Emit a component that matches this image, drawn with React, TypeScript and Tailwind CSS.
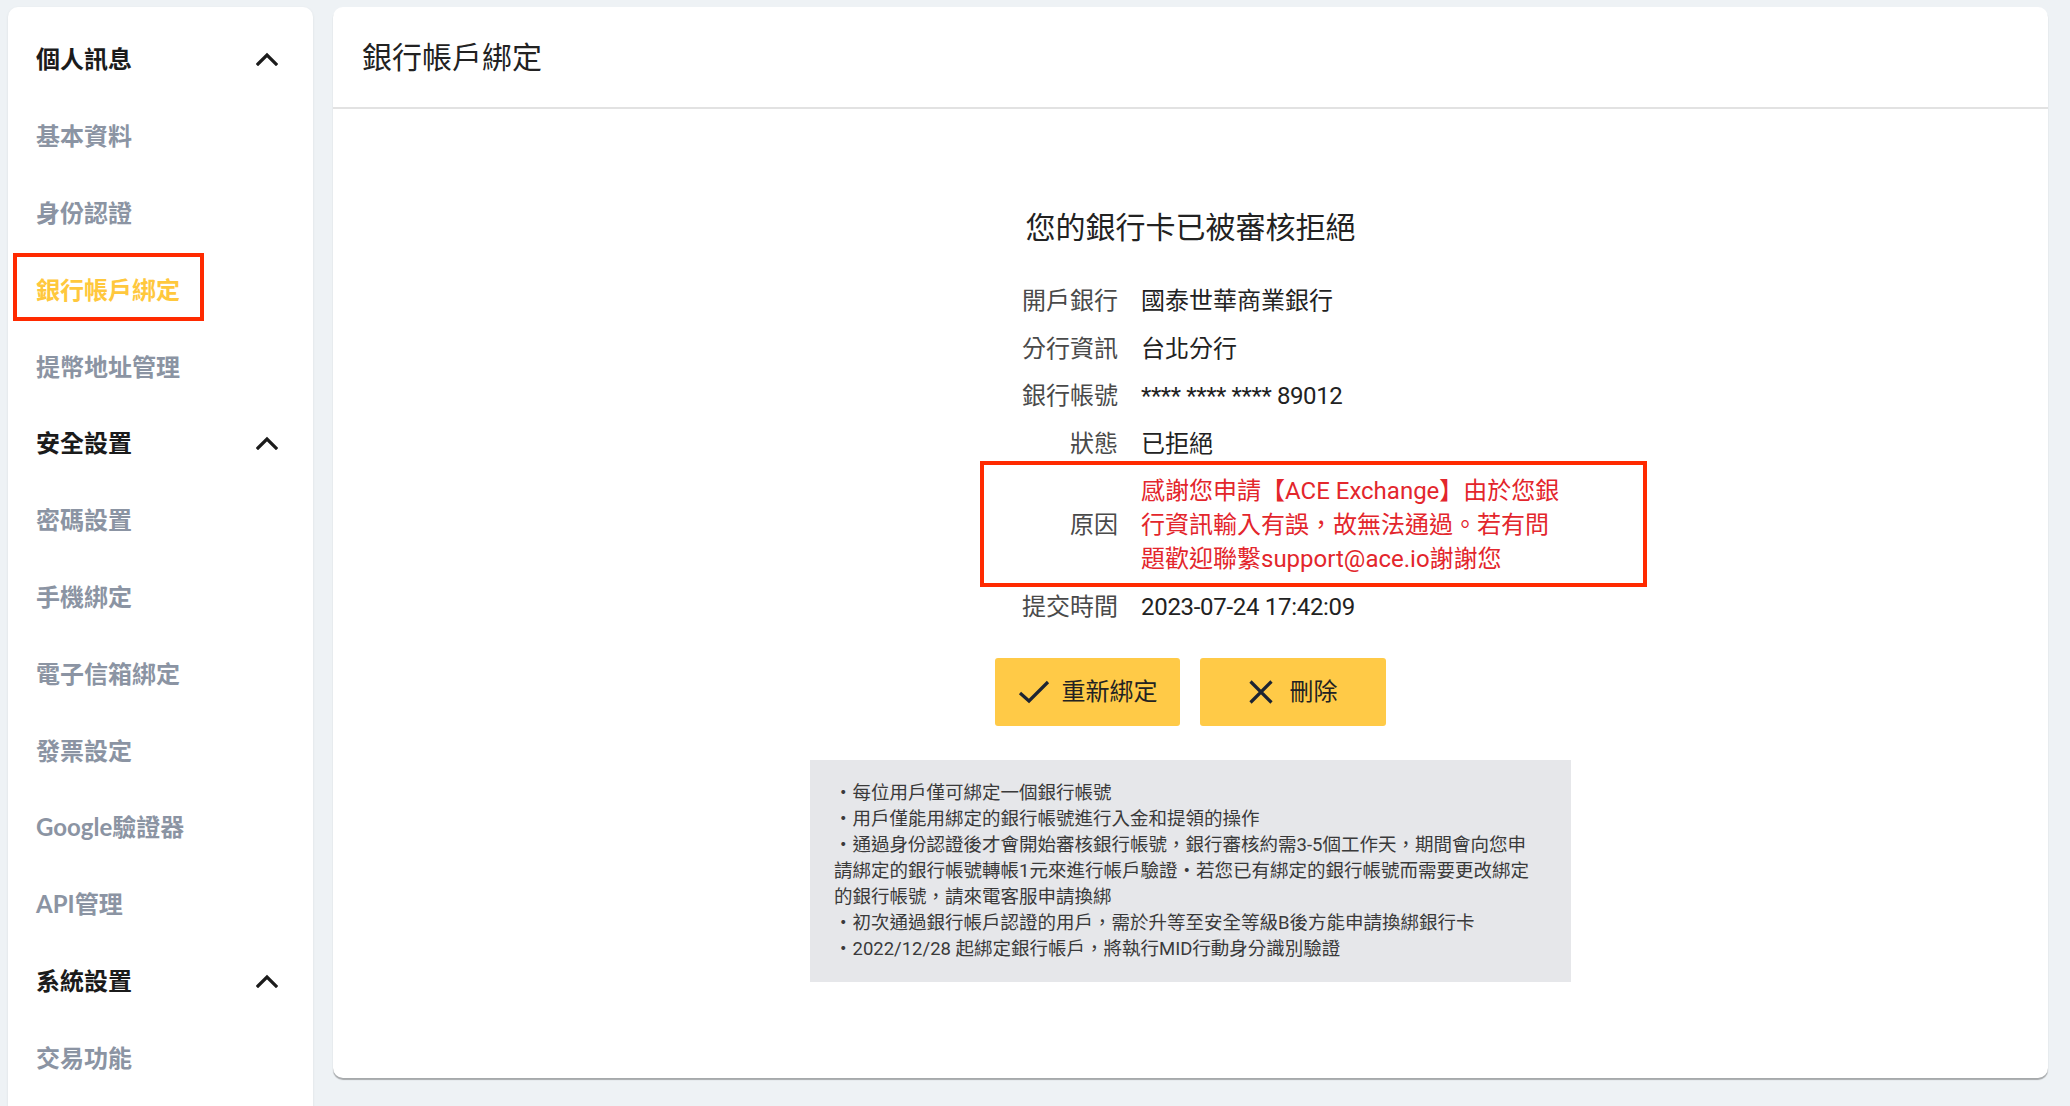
import { ReactNode } from "react";

const sections = [
  {
    title: "個人訊息",
    items: ["基本資料", "身份認證", "銀行帳戶綁定", "提幣地址管理"],
  },
  {
    title: "安全設置",
    items: ["密碼設置", "手機綁定", "電子信箱綁定", "發票設定", "Google驗證器", "API管理"],
  },
  {
    title: "系統設置",
    items: ["交易功能"],
  },
];

const notes = [
  "・每位用戶僅可綁定一個銀行帳號",
  "・用戶僅能用綁定的銀行帳號進行入金和提領的操作",
  "・通過身份認證後才會開始審核銀行帳號，銀行審核約需3-5個工作天，期間會向您申",
  "請綁定的銀行帳號轉帳1元來進行帳戶驗證・若您已有綁定的銀行帳號而需要更改綁定",
  "的銀行帳號，請來電客服申請換綁",
  "・初次通過銀行帳戶認證的用戶，需於升等至安全等級B後方能申請換綁銀行卡",
  "・2022/12/28 起綁定銀行帳戶，將執行MID行動身分識別驗證",
];

function ChevronUp() {
  return (
    <svg width="22" height="14" viewBox="0 0 22 14" fill="none">
      <path d="M2 12 11 3l9 9" stroke="#1b1b1b" strokeWidth="3.2" strokeLinecap="square" />
    </svg>
  );
}

function Sidebar() {
  return (
    <aside className="w-[305px] shrink-0 h-[1140px] rounded-[10px] bg-white shadow-[0_1px_3px_rgba(0,0,0,0.08)] pt-[14px] font-['Lato','Noto_Sans_CJK_TC',sans-serif] font-bold text-[24px]">
      {sections.map((s) => (
        <div key={s.title}>
          <div className="h-[76.8px] flex items-center justify-between pl-[28px] pr-[35px] text-[#1b1b1b]">
            <span>{s.title}</span>
            <ChevronUp />
          </div>
          {s.items.map((item) => {
            const active = item === "銀行帳戶綁定";
            return (
              <div
                key={item}
                className={`relative h-[76.8px] flex items-center pl-[28px] ${
                  active ? "text-[#ffc83d]" : "text-[#8b94a3]"
                }`}
              >
                {active && (
                  <div className="absolute left-[5px] top-[2px] w-[191px] h-[68px] border-4 border-[#ff2a00]" />
                )}
                <span>{item}</span>
              </div>
            );
          })}
        </div>
      ))}
    </aside>
  );
}

function InfoRow({ label, children, center }: { label: string; children: ReactNode; center?: boolean }) {
  return (
    <div className={`flex gap-[23px] ${center ? "items-center" : ""}`}>
      <div className="w-[96px] text-right text-[#4a4a4a]">{label}</div>
      <div className="w-[420px] text-[#222]">{children}</div>
    </div>
  );
}

function CheckIcon() {
  return (
    <svg width="32" height="26" viewBox="0 0 32 26" fill="none">
      <path d="M2 14 11 22 30 3" stroke="#1c2433" strokeWidth="3.2" />
    </svg>
  );
}

function XIcon() {
  return (
    <svg width="24" height="24" viewBox="0 0 24 24" fill="none">
      <path d="M1.5 1.5 22.5 22.5M22.5 1.5 1.5 22.5" stroke="#1c2433" strokeWidth="3.2" />
    </svg>
  );
}

function MainPanel() {
  return (
    <main className="w-[1715px] h-[1071px] shrink-0 rounded-[10px] bg-white shadow-[0_2px_1px_rgba(0,0,0,0.3)] font-['Roboto','Noto_Sans_CJK_TC',sans-serif]">
      <div className="h-[102px] flex items-center pl-[29px] border-b-2 border-[#e2e2e2] text-[30px] text-[#222]">
        銀行帳戶綁定
      </div>
      <div className="flex flex-col items-center pt-[99px]">
        <h2 className="text-[30px] leading-[40px] text-[#222]">您的銀行卡已被審核拒絕</h2>

        <div className="self-start ml-[689px] mt-[36px] flex flex-col gap-[13.5px] text-[24px] leading-[34px]">
          <InfoRow label="開戶銀行">國泰世華商業銀行</InfoRow>
          <InfoRow label="分行資訊">台北分行</InfoRow>
          <InfoRow label="銀行帳號">
            <span className="tracking-[-0.4px]">**** **** **** 89012</span>
          </InfoRow>
          <InfoRow label="狀態">已拒絕</InfoRow>
          <div className="relative">
            <div className="absolute -left-[42px] -top-[13px] -right-[86px] -bottom-[11px] border-4 border-[#ff2a00]" />
            <InfoRow label="原因" center>
              <div className="text-[#e3262c] whitespace-nowrap">
                感謝您申請【ACE Exchange】由於您銀
                <br />
                行資訊輸入有誤，故無法通過。若有問
                <br />
                題歡迎聯繫support@ace.io謝謝您
              </div>
            </InfoRow>
          </div>
          <InfoRow label="提交時間">
            <span className="tracking-[-0.3px]">2023-07-24 17:42:09</span>
          </InfoRow>
        </div>

        <div className="mt-[34px] flex gap-[20px] text-[24px] text-[#222]">
          <button className="w-[185px] h-[68px] rounded-[3px] bg-[#ffca47] flex items-center justify-center gap-[12px]">
            <CheckIcon />
            <span>重新綁定</span>
          </button>
          <button className="w-[186px] h-[68px] rounded-[3px] bg-[#ffca47] flex items-center justify-center gap-[17px]">
            <XIcon />
            <span>刪除</span>
          </button>
        </div>

        <div className="mt-[34px] w-[761px] bg-[#e6e7ea] pl-[24px] py-[20px] text-[18.5px] leading-[26px] text-[#3a3a3a]">
          {notes.map((n) => (
            <div key={n} className="whitespace-nowrap">
              {n}
            </div>
          ))}
        </div>
      </div>
    </main>
  );
}

export default function App() {
  return (
    <div className="h-[1106px] w-[2070px] overflow-hidden bg-[#eef2f5] flex gap-[20px] pl-[8px] pt-[7px]">
      <Sidebar />
      <MainPanel />
    </div>
  );
}
